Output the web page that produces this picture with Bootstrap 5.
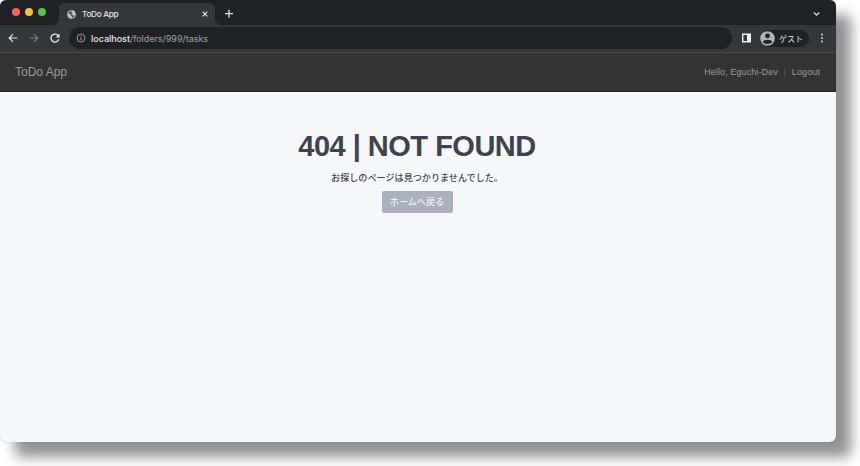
<!DOCTYPE html>
<html lang="ja">
<head>
<meta charset="utf-8">
<meta name="viewport" content="width=device-width, initial-scale=1">
<title>ToDo App</title>
<link href="https://cdn.jsdelivr.net/npm/bootstrap@5.3.0/dist/css/bootstrap.min.css" rel="stylesheet">
<style>
body{background:#fff;font-family:"Liberation Sans","Noto Sans CJK JP",sans-serif;line-height:1}
svg{display:block;flex:none}
.window{width:836px;height:442px;border-radius:6px;background:#f5f7f9;box-shadow:15px 15px 13px rgba(0,0,0,.43),0 0 1px rgba(0,0,0,.4)}
.tabs{height:25px;background:#202124;padding-left:12px}
.lights{gap:5px;padding-top:8px;width:47px}
.light{width:8px;height:8px}
.red{background:#fe6157}.yellow{background:#fdbd40}.green{background:#54cb45}
.tab{width:156px;height:22px;margin-top:3px;background:#35363a;border-radius:6px 6px 0 0;padding:0 7px 0 8px;position:relative;color:#e4e5e7;font:500 8.2px Inter,sans-serif;letter-spacing:-.3px}
.tab::before,.tab::after{content:"";position:absolute;bottom:0;width:5px;height:5px}
.tab::before{left:-5px;background:radial-gradient(circle at 0 0,transparent 4.5px,#35363a 5px)}
.tab::after{right:-5px;background:radial-gradient(circle at 100% 0,transparent 4.5px,#35363a 5px)}
.tools{height:27px;background:#35363a;padding:0 8px 1px 8px}
.address{width:663px;height:22px;margin-left:9px;background:#202124;padding-left:7px;font:400 9px Inter,sans-serif;color:#9aa0a6;letter-spacing:-.02px}
.address b{font-weight:500;color:#e8eaed}
.guest{width:49px;height:17px;margin-left:9px;background:#202124;color:#e4e6e8;font:400 8px "Noto Sans CJK JP",sans-serif}
.app-nav{height:40px;background:#333;border-top:1px solid #48494c;border-bottom:1px solid #222;padding:0 16px 0 15px;color:#999;font-size:9px;letter-spacing:.1px}
.brand{font-size:12px;color:#999;letter-spacing:0}
.divider{width:1px;height:9px;background:#484848;margin:0 7px 0 6px}
.message{padding:38px 2px 0 0;color:#3d444f}
.message h1{font-size:29px;line-height:32px;font-weight:700;margin:0;letter-spacing:-.5px}
.message p{font-size:9.1px;line-height:14px;margin:9px 0 6px;color:#3f4650;font-weight:500}
.home{width:71px;height:22px;padding:0;background:#aab2bd;border-radius:2px;color:#fff;font-size:9.1px;line-height:22px}
.home:hover{background:#9da5b0;color:#fff}
</style>
</head>
<body class="vh-100 overflow-hidden">
<div class="window overflow-hidden">
  <div class="tabs d-flex">
    <div class="lights d-flex"><span class="light red rounded-circle"></span><span class="light yellow rounded-circle"></span><span class="light green rounded-circle"></span></div>
    <div class="tab d-flex align-items-center">
      <svg width="9" height="9" viewBox="0 0 18 18"><circle cx="9" cy="9" r="8" fill="#54575b" stroke="#b6b9bd" stroke-width="2"/><path d="M2 7l5 2 1 3 2 1-1 4-4-2-3-5zM10 1l-1 4 3 2-3 2 4 2 4-1-1-5-3-3z" fill="#c8cacd"/></svg>
      <span class="flex-grow-1 ps-1"><span class="d-inline-block" style="padding-left:2px">ToDo App</span></span>
      <svg width="6" height="6" viewBox="0 0 6 6"><path d="M.7.7l4.6 4.6M5.3.7L.7 5.3" stroke="#e8eaed" stroke-width="1.1"/></svg>
    </div>
    <svg class="ms-2" width="12" height="25" viewBox="0 0 12 25"><path d="M2 13.7h8M6 9.7v8" stroke="#dfe1e5" stroke-width="1.3"/></svg>
    <svg class="ms-auto" width="24" height="25" viewBox="0 0 24 25"><path d="M1.8 12.6l2.8 2.5 2.8-2.5" fill="none" stroke="#d0d2d5" stroke-width="1.3"/></svg>
  </div>
  <div class="tools d-flex align-items-center">
    <svg width="10" height="10" viewBox="0 0 10 10"><path d="M9.3 5H1.3M5 1.2L1.2 5 5 8.8" fill="none" stroke="#e2e4e6" stroke-width="1.2"/></svg>
    <svg style="margin-left:11px" width="10" height="10" viewBox="0 0 10 10"><path d="M.7 5h8M5 1.2L8.8 5 5 8.8" fill="none" stroke="#7d7f83" stroke-width="1.1"/></svg>
    <svg style="margin-left:11px" width="10" height="10" viewBox="0 0 10 10"><path d="M8.8 6.2A4 4 0 1 1 7.8 2.2L8.5 3" fill="none" stroke="#e2e4e6" stroke-width="1.3"/><path d="M9.6.5v4H5.6z" fill="#e2e4e6"/></svg>
    <div class="address d-flex align-items-center rounded-pill">
      <svg width="10" height="10" viewBox="0 0 10 10"><circle cx="5" cy="5" r="4" fill="none" stroke="#a0a5aa" stroke-width=".9"/><path d="M5 4.4v2.9M5 2.7v1" stroke="#a0a5aa"/></svg>
      <span style="padding-left:5px"><b>localhost</b>/folders/999/tasks</span>
    </div>
    <svg style="margin-left:10px" width="9" height="10" viewBox="0 0 9 10"><path d="M0 .5h9v9H0zM1.4 2v6H5V2z" fill="#eceef0" fill-rule="evenodd"/></svg>
    <div class="guest d-flex align-items-center rounded-pill">
      <svg width="15" height="15" viewBox="0 0 15 15"><circle cx="7.5" cy="7.5" r="7.3" fill="#adb5bc"/><circle cx="7.5" cy="4.9" r="2.4" fill="#202124"/><path d="M2.6 10.8C4.2 7.9 10.8 7.9 12.4 10.8 10 13.8 5 13.8 2.6 10.8z" fill="#202124"/></svg>
      <span class="ps-1">ゲスト</span>
    </div>
    <svg class="ms-auto" width="12" height="10" viewBox="0 0 12 10"><g fill="#d2d4d7"><circle cx="6" cy="1.4" r="1"/><circle cx="6" cy="5" r="1"/><circle cx="6" cy="8.6" r="1"/></g></svg>
  </div>
  <nav class="app-nav d-flex align-items-center justify-content-between">
    <a class="brand text-decoration-none" href="#">ToDo App</a>
    <div class="d-flex align-items-center"><span>Hello, Eguchi-Dev</span><span class="divider"></span><span>Logout</span></div>
  </nav>
  <main class="message text-center">
    <h1>404 | NOT FOUND</h1>
    <p>お探しのページは見つかりませんでした。</p>
    <a class="btn home border-0" href="#">ホームへ戻る</a>
  </main>
</div>
</body>
</html>
